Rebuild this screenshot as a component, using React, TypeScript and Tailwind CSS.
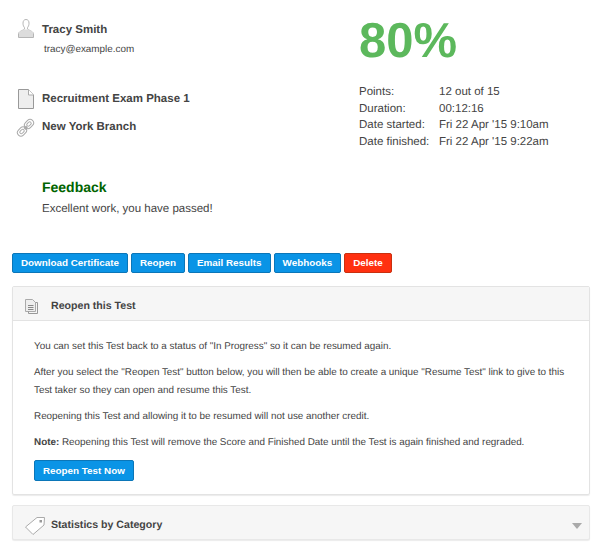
const UserIcon = () => (
  <svg width="16" height="19" viewBox="0 0 16 19" fill="none" className="shrink-0">
    <path d="M8 .5C6 .5 5 2 5 4.200c0 2 .7 3.500 1.500 4.500v1.200C6.500 11 1 12 .5 14.500V18.500h15v-4C15 12 9.500 11 9.500 9.900V8.700c.8-1 1.500-2.500 1.500-4.500C11 2 10 .5 8 .5z" fill="#fff" stroke="#b5b5b5" />
    <path d="M1 13.500c1-1.500 4-2 5-3h4c1 1 4 1.500 5 3V18H1z" fill="#dcdcdc" />
  </svg>
);

const FileIcon = () => (
  <svg width="16" height="20" viewBox="0 0 16 20" fill="none" className="shrink-0">
    <path d="M.5.500h10l5 5.500v13.500H.5z" fill="#eee" stroke="#999" />
    <path d="M10.500.500V6h5" fill="#fff" stroke="#aaa" />
  </svg>
);

const LinkIcon = () => (
  <svg width="20" height="20" viewBox="0 0 20 20" fill="none" className="shrink-0">
    <g stroke="#aaa" strokeWidth="1" fill="#fff">
      <rect x="8" y="2.500" width="10" height="7" rx="3.500" transform="rotate(-45 13 6)" />
      <rect x="10.500" y="4.500" width="5" height="3" rx="1.500" transform="rotate(-45 13 6)" />
      <rect x="1" y="10" width="10" height="7" rx="3.500" transform="rotate(-45 6 13.500)" />
      <rect x="3.500" y="12" width="5" height="3" rx="1.500" transform="rotate(-45 6 13.500)" />
    </g>
    <path d="M8.500 11l2.500-2.500" stroke="#aaa" strokeWidth="2.500" />
  </svg>
);

const NoteIcon = () => (
  <svg width="13" height="15" viewBox="0 0 13 15" fill="none" className="shrink-0">
    <path d="M.5.500h7l3 3v9H.5z" fill="#eee" stroke="#aaa" />
    <path d="M10.500 3.500h2v11h-9v-2" stroke="#999" />
    <path d="M3 6.500h5.500M3 8.500h5.500M3 10.500h5.500" stroke="#888" />
  </svg>
);

const TagIcon = () => (
  <svg width="20" height="18" viewBox="0 0 20 18" fill="none" className="shrink-0">
    <path d="M12 .5h7.500l-.5 7.500-11 9.500-7.500-7.500z" fill="#fff" stroke="#aaa" />
    <rect x="14.500" y="3" width="2.500" height="2.500" fill="#999" />
  </svg>
);

const buttons = ["Download Certificate", "Reopen", "Email Results", "Webhooks"];

const stats = [
  ["Points:", "12 out of 15"],
  ["Duration:", "00:12:16"],
  ["Date started:", "Fri 22 Apr '15 9:10am"],
  ["Date finished:", "Fri 22 Apr '15 9:22am"],
];

export default function App() {
  return (
    <div className="w-[600px] h-[555px] overflow-hidden bg-white px-3 text-[#444] font-['Liberation_Sans',Arial,sans-serif] [text-rendering:geometricPrecision]">
      {/* Top summary */}
      <div className="flex h-[253px]">
        <div className="w-[347px] shrink-0">
          <div className="flex items-start gap-2 pl-[6px] pt-[19px]">
            <UserIcon />
            <span className="mt-[1px] text-[11.500px] font-bold leading-5">Tracy Smith</span>
          </div>
          <div className="ml-[32px] text-[9.900px] leading-5">tracy@example.com</div>
          <div className="mt-[29px] flex items-center gap-2 pl-[6px]">
            <FileIcon />
            <span className="pt-[2px] text-[11.500px] font-bold">Recruitment Exam Phase 1</span>
          </div>
          <div className="mt-[9px] flex items-center gap-[6px] pl-[4px]">
            <LinkIcon />
            <span className="text-[11.500px] font-bold">New York Branch</span>
          </div>
          <div className="ml-[30px] mt-[39px] text-sm font-bold leading-5 text-[#006400]">Feedback</div>
          <div className="ml-[30px] mt-[2px] text-[11.500px] leading-5">Excellent work, you have passed!</div>
        </div>
        <div>
          <div className="text-[49px] font-bold leading-[58px] text-[#5cb85c] mt-[12px]">80%</div>
          <div className="mt-[14px] grid grid-cols-[80px_1fr] text-[11.500px] leading-[16.500px]">
            {stats.map(([label, value]) => (
              <div key={label} className="contents">
                <span>{label}</span>
                <span>{value}</span>
              </div>
            ))}
          </div>
        </div>
      </div>

      {/* Actions */}
      <div className="flex gap-[3px]">
        {buttons.map((b) => (
          <button key={b} className="h-5 rounded-[2px] border border-[#0b76b8] bg-[#0a94e6] px-2 text-[9.850px] font-bold text-white">
            {b}
          </button>
        ))}
        <button className="h-5 rounded-[2px] border border-[#c9300f] bg-[#ff3010] px-2 text-[9.850px] font-bold text-white">Delete</button>
      </div>

      {/* Reopen panel */}
      <div className="mt-[13px] w-[578px] rounded-[2px] border border-[#e3e3e3] shadow-[0_1px_1px_rgba(0,0,0,0.08)]">
        <div className="flex h-[34px] items-center gap-[13px] border-b border-[#e3e3e3] bg-[#f6f6f6] pl-[12px] pt-[6px]">
          <NoteIcon />
          <span className="text-[10.600px] font-bold">Reopen this Test</span>
        </div>
        <div className="px-[21px] pb-[13px] pt-[17px] text-[9.900px] leading-[18px]">
          <p>You can set this Test back to a status of "In Progress" so it can be resumed again.</p>
          <p className="mt-2">
            After you select the "Reopen Test" button below, you will then be able to create a unique "Resume Test" link to give to this Test taker so they can open and resume this Test.
          </p>
          <p className="mt-2">Reopening this Test and allowing it to be resumed will not use another credit.</p>
          <p className="mt-2">
            <b>Note:</b> Reopening this Test will remove the Score and Finished Date until the Test is again finished and regraded.
          </p>
          <button className="mt-2 block h-[21px] rounded-[2px] border border-[#0b76b8] bg-[#0a94e6] px-2 text-[9.850px] font-bold text-white">
            Reopen Test Now
          </button>
        </div>
      </div>

      {/* Statistics panel */}
      <div className="mt-[10px] flex h-[35px] w-[578px] items-center rounded-[2px] border border-[#e8e8e8] bg-[#f6f6f6] pl-[12px] pr-[7px] pt-[6px] shadow-[0_1px_1px_rgba(0,0,0,0.08)]">
        <TagIcon />
        <span className="ml-[6px] text-[10.600px] font-bold">Statistics by Category</span>
        <span className="ml-auto h-0 w-0 border-x-[5px] border-t-[6px] border-x-transparent border-t-[#aaa]" />
      </div>
    </div>
  );
}
